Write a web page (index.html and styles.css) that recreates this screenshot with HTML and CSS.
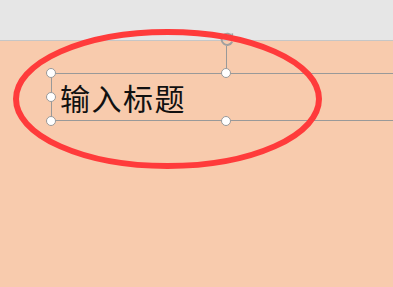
FILE: index.html
```html
<!DOCTYPE html>
<html lang="zh-CN">
<head>
    <meta charset="UTF-8">
    <meta name="viewport" content="width=device-width, initial-scale=1.0">
    <title>输入标题</title>
    <link rel="stylesheet" href="styles.css">
</head>
<body>
    <div class="topbar"></div>
    <div class="slide">
        <div class="textbox">
            <span class="title">输入标题</span>
            <span class="handle h-tl"></span>
            <span class="handle h-tm"></span>
            <span class="handle h-ml"></span>
            <span class="handle h-bl"></span>
            <span class="handle h-bm"></span>
            <span class="rotate-line"></span>
            <svg class="rotate" width="16" height="16" viewBox="0 0 16 16">
                <path d="M13 5.4 A5.6 5.6 0 1 0 13.2 10.8" fill="none" stroke="#a0a0a0" stroke-width="2"/>
                <path d="M9.8 5.6 L13.2 5.8 L13.4 2.4" fill="none" stroke="#a0a0a0" stroke-width="1.6"/>
            </svg>
        </div>
    </div>

    <!-- hand drawn red circle over the slide -->
    <svg class="mark" width="393" height="287" viewBox="0 0 393 287">
        <ellipse cx="167.5" cy="99" rx="151.5" ry="67" fill="none" stroke="#ff3b3b" stroke-width="6"/>
    </svg>
</body>
</html>
```

FILE: styles.css
```css
body {
    margin: 0;
    padding: 0;
    width: 393px;
    height: 287px;
    overflow: hidden;
    position: relative;
    font-family: "Noto Sans CJK SC", "Noto Sans", sans-serif;
    background-color: #f8cbad;
}

.topbar {
    height: 40px;
    background-color: #e6e6e6;
    border-bottom: 1px solid #c6c6c6;
}

.slide {
    padding-top: 32px;
    padding-left: 51px;
}

.textbox {
    position: relative;
    height: 46px;
    border-top: 1px solid #999;
    border-bottom: 1px solid #999;
    border-left: 1px solid #999;
    display: flex;
    align-items: center;
    padding-left: 8px;
}

.title {
    font-size: 30px;
    line-height: 1;
    color: #111;
    letter-spacing: 1.5px;
    margin-top: 0;
}

.handle {
    position: absolute;
    width: 8px;
    height: 8px;
    border: 1.5px solid #999;
    border-radius: 50%;
    background: #fff;
    z-index: 2;
}

.h-tl { left: -6px; top: -6px; }
.h-tm { left: 169px; top: -6px; }
.h-ml { left: -6px; top: 18px; }
.h-bl { left: -6px; bottom: -6px; }
.h-bm { left: 169px; bottom: -6px; }

.rotate-line {
    position: absolute;
    left: 174px;
    top: -28px;
    width: 1px;
    height: 28px;
    background: #999;
}

.rotate {
    position: absolute;
    left: 167px;
    top: -43px;
}

.mark {
    position: absolute;
    left: 0;
    top: 0;
    z-index: 1;
}
```
